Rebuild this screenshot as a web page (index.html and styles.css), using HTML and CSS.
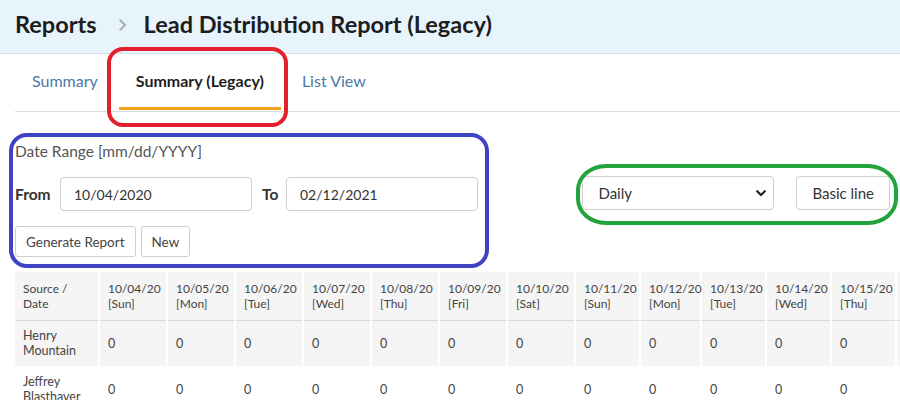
FILE: index.html
```html
<!DOCTYPE html>
<html>
<head>
<meta charset="utf-8">
<link rel="stylesheet" href="styles.css">
</head>
<body>
<div class="page">
  <header class="topbar">
    <span class="crumb">Reports</span>
    <svg class="sep" width="8" height="12" viewBox="0 0 8 12"><path d="M1.5 1.5 L6 6 L1.5 10.5" fill="none" stroke="#aab1b7" stroke-width="2.4" stroke-linecap="round" stroke-linejoin="round"/></svg>
    <span class="crumb">Lead Distribution Report (Legacy)</span>
  </header>
  <main class="content">
    <nav class="tabs">
      <a class="tab">Summary</a>
      <a class="tab active">Summary (Legacy)</a>
      <a class="tab">List View</a>
    </nav>
    <section class="filters">
      <div class="range">
        <div class="range-title">Date Range [mm/dd/YYYY]</div>
        <div class="range-row">
          <label class="lbl">From</label>
          <div class="field">10/04/2020</div>
          <label class="lbl lbl-to">To</label>
          <div class="field">02/12/2021</div>
        </div>
        <div class="btn-row">
          <button class="btn">Generate Report</button>
          <button class="btn">New</button>
        </div>
      </div>
      <div class="chart-controls">
        <div class="select">
          <span>Daily</span>
          <svg class="chev" width="10" height="7" viewBox="0 0 10 7"><path d="M1.2 1.2 L5 5 L8.8 1.2" fill="none" stroke="#222" stroke-width="2.2" stroke-linecap="round" stroke-linejoin="round"/></svg>
        </div>
        <button class="btn btn-lg">Basic line</button>
      </div>
    </section>
    <div class="table-wrap">
      <table class="grid">
        <thead>
          <tr>
            <th class="c-src">Source /<br>Date</th>
            <th class="c-d">10/04/20<br>[Sun]</th>
            <th class="c-d">10/05/20<br>[Mon]</th>
            <th class="c-d">10/06/20<br>[Tue]</th>
            <th class="c-d">10/07/20<br>[Wed]</th>
            <th class="c-d">10/08/20<br>[Thu]</th>
            <th class="c-d">10/09/20<br>[Fri]</th>
            <th class="c-d">10/10/20<br>[Sat]</th>
            <th class="c-e">10/11/20<br>[Sun]</th>
            <th class="c-f">10/12/20<br>[Mon]</th>
            <th class="c-e">10/13/20<br>[Tue]</th>
            <th class="c-e">10/14/20<br>[Wed]</th>
            <th class="c-e">10/15/20<br>[Thu]</th>
            <th class="c-e hl">10/16/20<br>[Fri]</th>
          </tr>
        </thead>
        <tbody>
          <tr class="odd">
            <td>Henry<br>Mountain</td>
            <td>0</td><td>0</td><td>0</td><td>0</td><td>0</td><td>0</td><td>0</td><td>0</td><td>0</td><td>0</td><td>0</td><td>0</td><td class="hl">0</td>
          </tr>
          <tr>
            <td>Jeffrey<br>Blasthaver</td>
            <td>0</td><td>0</td><td>0</td><td>0</td><td>0</td><td>0</td><td>0</td><td>0</td><td>0</td><td>0</td><td>0</td><td>0</td><td class="hl">0</td>
          </tr>
        </tbody>
      </table>
    </div>
  </main>
  <div class="mark mark-red"></div>
  <div class="mark mark-blue"></div>
  <div class="mark mark-green"></div>
</div>
</body>
</html>
```
FILE: styles.css
```css
* { box-sizing: border-box; }
html, body { margin: 0; padding: 0; }
body {
  font-family: Lato, "Open Sans", sans-serif;
  color: #222;
  background: #fff;
  width: 900px;
  height: 400px;
  overflow: hidden;
}
.page { position: relative; width: 900px; height: 400px; overflow: hidden; }

.topbar {
  height: 54px;
  background: #e8f4fc;
  border-bottom: 1px solid #d6e0e8;
  display: flex;
  align-items: center;
  padding: 0 15px 6px;
  font-size: 23.5px;
  font-weight: 700;
  color: #1d1d1d;
}
.sep { margin: 2px 17px 0 22px; }

.content { padding: 0 0 0 15px; }

.tabs {
  display: flex;
  height: 58px;
  border-bottom: 1px solid #dcdcdc;
  gap: 4px;
}
.tab {
  display: flex;
  align-items: center;
  padding: 0 17px 1px;
  font-size: 16px;
  color: #4b79a6;
  border-bottom: 3px solid transparent;
  margin-bottom: 1px;
}
.tab.active { color: #1d1d1d; font-weight: 700; border-bottom-color: #f2a21b; }

.filters {
  display: flex;
  justify-content: space-between;
  align-items: flex-start;
  padding-top: 29px;
  padding-right: 10px;
}
.range-title { font-size: 15.5px; color: #555; line-height: 20px; margin-top: 0; }
.range-row { display: flex; align-items: center; margin-top: 16px; }
.lbl { font-size: 15.5px; font-weight: 700; color: #333; width: 45px; }
.lbl-to { width: 24px; margin-left: 10px; }
.field {
  width: 192px;
  height: 34px;
  border: 1px solid #cfcfcf;
  border-radius: 4px;
  padding: 0 13px;
  display: flex;
  align-items: center;
  font-size: 14px;
  color: #333;
}
.btn-row { display: flex; gap: 5px; margin-top: 15px; }
.btn {
  font-family: inherit;
  font-size: 13.5px;
  color: #444;
  background: #fff;
  border: 1px solid #cfcfcf;
  border-radius: 3px;
  height: 31px;
  padding: 0 10px;
}
.chart-controls { display: flex; gap: 22px; padding-top: 35px; }
.select {
  width: 192px;
  height: 34px;
  border: 1px solid #cfcfcf;
  border-radius: 4px;
  padding: 0 7px 0 15px;
  display: flex;
  align-items: center;
  justify-content: space-between;
  font-size: 15px;
  color: #333;
}
.btn-lg { height: 34px; font-size: 15px; padding: 0 15px; border-radius: 4px; color: #333; }

.table-wrap { margin-top: 15px; width: 900px; overflow: hidden; }
.grid {
  border-collapse: collapse;
  table-layout: fixed;
  width: 940px;
  font-size: 12.5px;
  color: #444;
}
.grid th, .grid td {
  text-align: left;
  vertical-align: middle;
  padding: 0 8px;
  border-left: 2px solid #fff;
  line-height: 15px;
  font-weight: 400;
}
.grid th { font-size: 12px; }
.grid th:first-child, .grid td:first-child { border-left: 0; }
.grid thead tr { background: #f5f5f5; height: 48px; border-bottom: 1px solid #dadada; }
.grid tbody tr { height: 46px; }
.grid tbody tr.odd { background: #f5f5f5; }
.c-src { width: 84px; }
.c-d { width: 68px; }
.c-e { width: 65px; }
.c-f { width: 61px; }
.hl { color: #f2a21b; }

.mark { position: absolute; pointer-events: none; }
.mark-red { left: 107px; top: 47px; width: 181px; height: 80px; border: 4px solid #e3202b; border-radius: 16px; }
.mark-blue { left: 9px; top: 133px; width: 480px; height: 135px; border: 4px solid #3d43c3; border-radius: 18px; }
.mark-green { left: 576px; top: 164px; width: 322px; height: 61px; border: 4px solid #22a33c; border-radius: 30px / 26px; }
```
